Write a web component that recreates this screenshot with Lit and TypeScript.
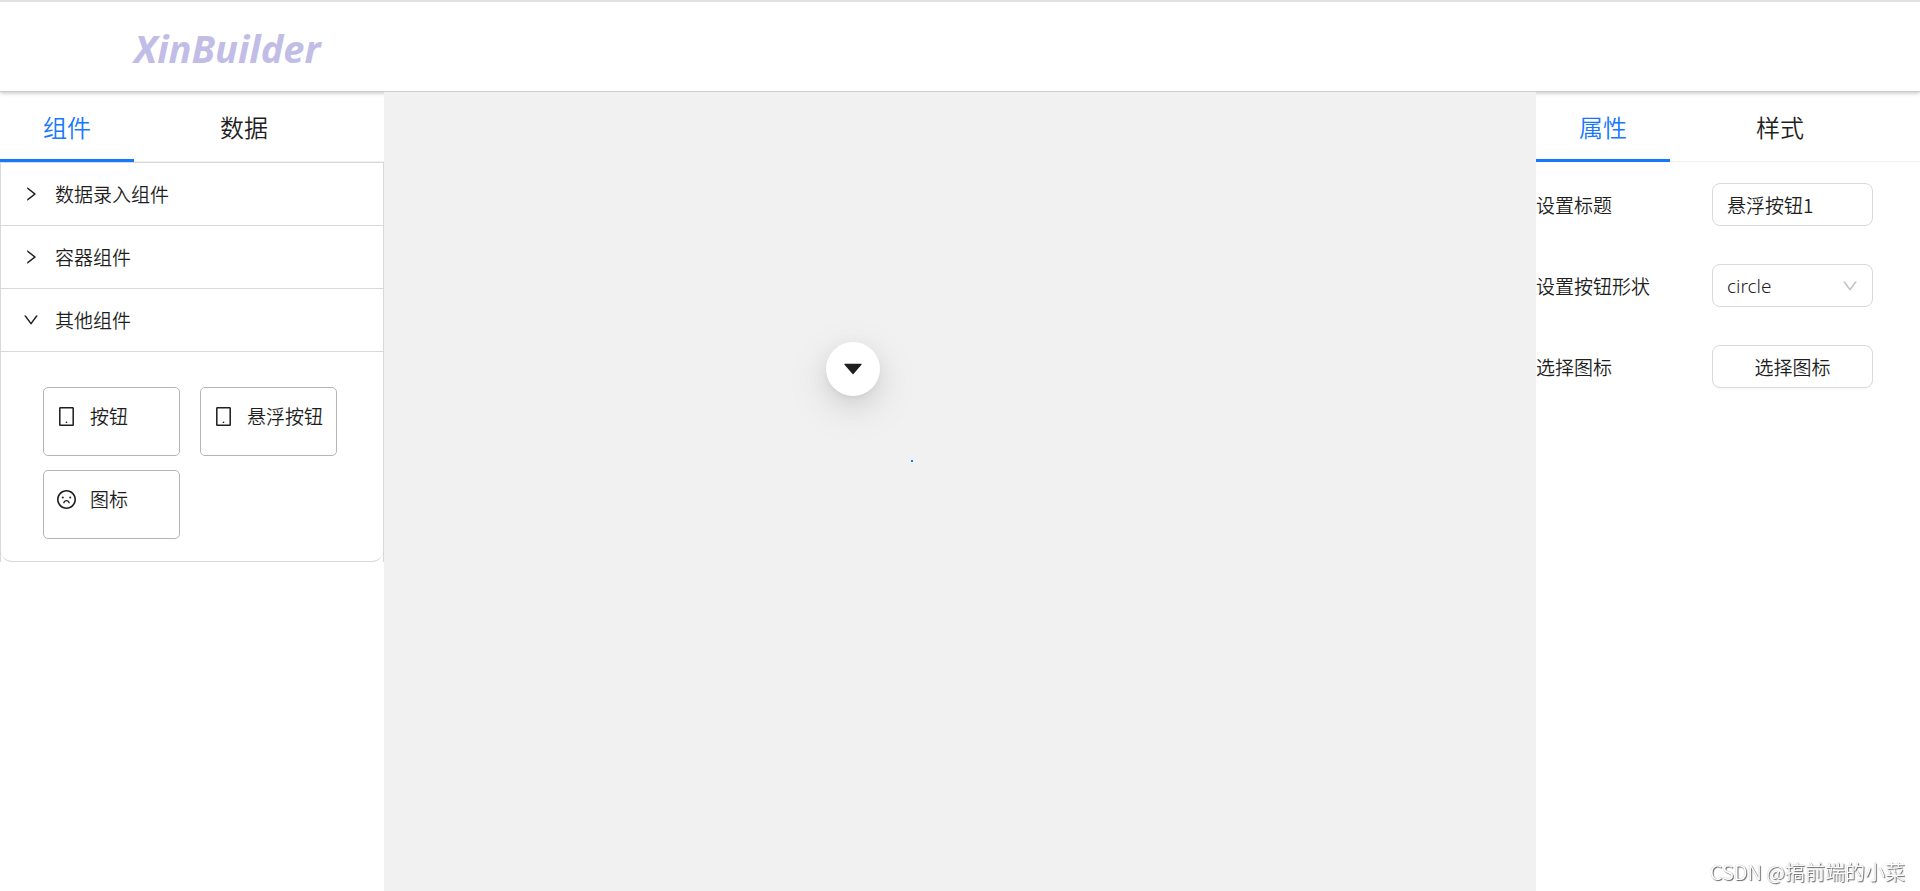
import { LitElement, html, css, svg } from "lit";
import { customElement, property, state } from "lit/decorators.js";

const shared = css`
  * {
    box-sizing: border-box;
  }
  button,
  input,
  select {
    font: inherit;
    color: inherit;
    margin: 0;
  }
  svg {
    display: block;
    flex: none;
    fill: currentColor;
  }
`;

const outlineIcons = {
  right: svg`<path d="M765.7 486.8L314.900 134.700A7.970 7.970 0 00302 141v77.300c0 4.900 2.300 9.600 6.100 12.600l360 281.100-360 281.100c-3.900 3-6.100 7.700-6.100 12.600V883c0 6.700 7.700 10.400 12.900 6.300l450.800-352.100a31.960 31.960 0 000-50.400z"/>`,
  down: svg`<path d="M884 256h-75c-5.100 0-9.900 2.500-12.900 6.600L512 654.200 227.900 262.600c-3-4.100-7.800-6.600-12.900-6.600h-75c-6.500 0-10.300 7.400-6.500 12.700l352.600 486.100c12.800 17.600 39 17.600 51.700 0l352.600-486.100c3.900-5.300.1-12.700-6.400-12.700z"/>`,
  caret: svg`<path d="M840.400 300H183.600c-19.700 0-30.700 20.800-18.500 35l328.400 380.800c9.400 10.900 27.500 10.900 37 0L858.900 335c12.200-14.200 1.200-35-18.500-35z"/>`,
  tablet: svg`<path d="M800 64H224c-35.300 0-64 28.700-64 64v768c0 35.300 28.700 64 64 64h576c35.300 0 64-28.700 64-64V128c0-35.300-28.700-64-64-64zm-8 824H232V136h560v752zM472 784a40 40 0 1080 0 40 40 0 10-80 0z"/>`,
  frown: svg`<path d="M288 421a48 48 0 1096 0 48 48 0 10-96 0zm352 0a48 48 0 1096 0 48 48 0 10-96 0zM512 64C264.600 64 64 264.600 64 512s200.600 448 448 448 448-200.600 448-448S759.400 64 512 64zm263 711c-34.200 34.200-74 61-118.300 79.800C611 874.200 562.300 884 512 884c-50.300 0-99-9.800-144.800-29.200A370.400 370.400 0 01248.900 775c-34.200-34.200-61-74-79.800-118.300C149.800 611 140 562.300 140 512s9.800-99 29.200-144.800A370.400 370.400 0 01249 248.900c34.200-34.200 74-61 118.300-79.800C413 149.800 461.700 140 512 140c50.300 0 99 9.800 144.800 29.200A370.400 370.400 0 01775.100 249c34.200 34.200 61 74 79.800 118.300C874.200 413 884 461.700 884 512s-9.800 99-29.200 144.800A368.890 368.890 0 01775 775zM512 533c-85.500 0-155.600 67.300-160 151.600a8 8 0 008 8.400h48.100c4.200 0 7.800-3.200 8.100-7.400C420 636.100 461.500 597 512 597s92.100 39.100 95.800 88.600c.3 4.200 3.900 7.400 8.100 7.400H664a8 8 0 008-8.400C667.600 600.300 597.500 533 512 533z"/>`,
};

type IconName = keyof typeof outlineIcons;

const icon = (name: IconName, size: number) => html`
  <svg viewBox="64 64 896 896" width=${size} height=${size} aria-hidden="true">
    ${outlineIcons[name]}
  </svg>
`;

@customElement("tab-bar")
export class TabBar extends LitElement {
  @property({ attribute: false }) tabs: string[] = [];
  @state() private active = 0;

  static styles = [
    shared,
    css`
      :host {
        display: block;
      }
      .tabs {
        display: flex;
        gap: 43px;
        border-bottom: 1px solid #f0f0f0;
      }
      .tab {
        margin-bottom: -1px;
        padding: 16px 43px 13px;
        border: 0;
        border-bottom: 3px solid transparent;
        background: none;
        font-size: 24px;
        line-height: 38px;
        cursor: pointer;
      }
      .tab.active {
        color: #1677ff;
        border-bottom-color: #1677ff;
      }
    `,
  ];

  render() {
    return html`
      <div class="tabs" role="tablist">
        ${this.tabs.map(
          (label, i) => html`<button
            class="tab ${i === this.active ? "active" : ""}"
            role="tab"
            aria-selected=${i === this.active}
            @click=${() => (this.active = i)}
          >${label}</button>`
        )}
      </div>
    `;
  }
}

@customElement("component-palette")
export class ComponentPalette extends LitElement {
  @state() private open = 2;

  private groups: { title: string; items: { icon: IconName; label: string }[] }[] = [
    { title: "数据录入组件", items: [] },
    { title: "容器组件", items: [] },
    {
      title: "其他组件",
      items: [
        { icon: "tablet", label: "按钮" },
        { icon: "tablet", label: "悬浮按钮" },
        { icon: "frown", label: "图标" },
      ],
    },
  ];

  static styles = [
    shared,
    css`
      :host {
        display: block;
      }
      .collapse {
        border: 1px solid #d9d9d9;
        border-bottom: 0;
      }
      .head {
        display: flex;
        align-items: center;
        gap: 16px;
        width: 100%;
        padding: 16px 22px;
        border: 0;
        border-bottom: 1px solid #d9d9d9;
        background: none;
        line-height: 30px;
        text-align: left;
        cursor: pointer;
      }
      .body {
        display: grid;
        grid-template-columns: repeat(2, 137px);
        gap: 14px 20px;
        padding: 35px 42px 22px;
        border-bottom: 1px solid #d9d9d9;
        border-radius: 0 0 11px 11px;
      }
      .card {
        display: flex;
        align-items: center;
        gap: 14px;
        padding: 13px 13px 24px;
        border: 1px solid #b5b5b5;
        border-radius: 5px;
        background: #fff;
        line-height: 30px;
        white-space: nowrap;
        cursor: grab;
      }
    `,
  ];

  render() {
    return html`
      <div class="collapse">
        ${this.groups.map(
          (group, i) => html`
            <button
              class="head"
              aria-expanded=${i === this.open}
              @click=${() => (this.open = i === this.open ? -1 : i)}
            >
              ${icon(i === this.open ? "down" : "right", 16)}
              <span>${group.title}</span>
            </button>
            ${i === this.open && group.items.length
              ? html`<div class="body">
                  ${group.items.map(
                    (item) => html`<button class="card">
                      ${icon(item.icon, 19)}<span>${item.label}</span>
                    </button>`
                  )}
                </div>`
              : ""}
          `
        )}
      </div>
    `;
  }
}

@customElement("property-form")
export class PropertyForm extends LitElement {
  static styles = [
    shared,
    css`
      :host {
        display: block;
      }
      .form {
        display: grid;
        grid-template-columns: 176px 161px;
        row-gap: 38px;
        align-items: center;
        margin: 0;
        padding-top: 21px;
      }
      .control {
        width: 100%;
        height: 43px;
        padding: 0 14px;
        border: 1px solid #d9d9d9;
        border-radius: 8px;
        background: #fff;
        outline: none;
      }
      .control:focus-visible {
        border-color: #1677ff;
      }
      .select {
        display: grid;
        grid-template-columns: 1fr auto;
        align-items: center;
      }
      .select .control {
        grid-area: 1 / 1 / 2 / 3;
        appearance: none;
        font-family: "Noto Sans", "Noto Sans CJK SC", sans-serif;
        font-weight: 300;
      }
      .arrow {
        grid-area: 1 / 2;
        margin-right: 15px;
        color: #bfbfbf;
        pointer-events: none;
      }
      .button {
        cursor: pointer;
        box-shadow: 0 2px 0 rgba(0, 0, 0, 0.02);
      }
    `,
  ];

  render() {
    return html`
      <form class="form" @submit=${(e: Event) => e.preventDefault()}>
        <label for="title">设置标题</label>
        <input id="title" class="control" type="text" value="悬浮按钮1" />
        <label for="shape">设置按钮形状</label>
        <div class="select">
          <select id="shape" class="control">
            <option selected>circle</option>
            <option>square</option>
          </select>
          <span class="arrow">${icon("down", 16)}</span>
        </div>
        <label for="icon">选择图标</label>
        <button id="icon" class="control button" type="button">选择图标</button>
      </form>
    `;
  }
}

@customElement("app-root")
export class AppRoot extends LitElement {
  static styles = [
    shared,
    css`
      :host {
        display: flex;
        flex-direction: column;
        min-height: 100vh;
        background: #fff;
        color: #1f1f1f;
        font-family: "Noto Sans CJK SC", sans-serif;
        font-size: 19px;
        font-weight: 350;
        line-height: 30px;
      }
      .header {
        position: relative;
        padding: 20px 134px 16px;
        border-top: 2px solid #e0e0e0;
        border-bottom: 1px solid #d0cccc;
        background: #fff;
        box-shadow: 0 1px 4px rgba(0, 0, 0, 0.25);
      }
      .logo {
        margin: 0;
        color: #c1bde6;
        font-family: "Noto Sans", sans-serif;
        font-size: 38px;
        font-style: italic;
        font-weight: 700;
        line-height: 53px;
      }
      .workspace {
        flex: 1;
        display: grid;
        grid-template-columns: 1fr 3fr 1fr;
      }
      .canvas {
        position: relative;
        background: #f1f1f1;
      }
      .float {
        position: absolute;
        left: 442px;
        top: 250px;
        display: grid;
        place-items: center;
        width: 54px;
        height: 54px;
        padding: 0;
        border: 0;
        border-radius: 50%;
        background: #fff;
        box-shadow: 0 8px 21px rgba(0, 0, 0, 0.08), 0 4px 8px -5px rgba(0, 0, 0, 0.12),
          0 12px 37px 11px rgba(0, 0, 0, 0.05);
        cursor: pointer;
      }
      .handle {
        position: absolute;
        left: 527px;
        top: 368px;
        width: 2px;
        height: 2px;
        background: #1677ff;
      }
      .watermark {
        position: fixed;
        right: 15px;
        bottom: 4px;
        color: #fff;
        font-size: 20px;
        text-shadow: 1px 1px 1px #666, 0 0 1px #aaa;
      }
    `,
  ];

  render() {
    return html`
      <header class="header"><h1 class="logo">XinBuilder</h1></header>
      <main class="workspace">
        <aside>
          <tab-bar .tabs=${["组件", "数据"]}></tab-bar>
          <component-palette></component-palette>
        </aside>
        <section class="canvas">
          <button class="float" aria-label="悬浮按钮1">${icon("caret", 22)}</button>
          <span class="handle"></span>
        </section>
        <aside>
          <tab-bar .tabs=${["属性", "样式"]}></tab-bar>
          <property-form></property-form>
        </aside>
      </main>
      <div class="watermark">CSDN @搞前端的小菜</div>
    `;
  }
}
